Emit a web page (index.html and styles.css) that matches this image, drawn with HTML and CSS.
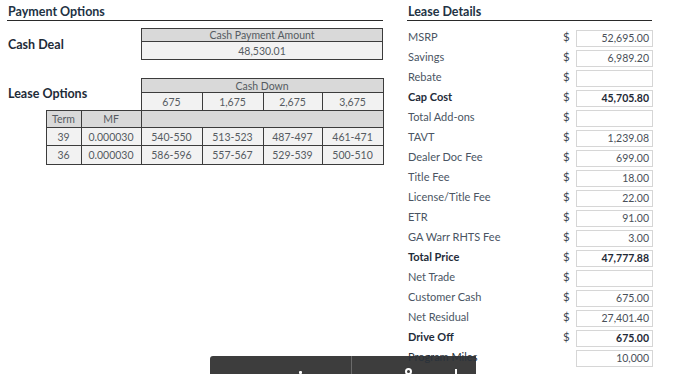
FILE: index.html
```html
<!DOCTYPE html>
<html>
<head>
<meta charset="utf-8">
<link rel="stylesheet" href="styles.css">
</head>
<body>
<div class="page">
  <section class="left">
    <h2 class="title">Payment Options</h2>
    <div class="cash-row">
      <div class="big-label">Cash Deal</div>
      <table class="grid cash">
        <tr><td class="hd">Cash Payment Amount</td></tr>
        <tr><td class="val">48,530.01</td></tr>
      </table>
    </div>
    <table class="grid lease">
      <colgroup>
        <col class="c0"><col class="c1"><col class="c2"><col class="c3"><col class="c3"><col class="c4"><col class="c3">
      </colgroup>
      <tr class="r-hd">
        <td class="blank lease-label" colspan="3" rowspan="2"><span class="big-label">Lease Options</span></td>
        <td class="hd" colspan="4">Cash Down</td>
      </tr>
      <tr class="r-val">
        <td class="val">675</td><td class="val">1,675</td><td class="val">2,675</td><td class="val">3,675</td>
      </tr>
      <tr class="r-term">
        <td class="blank"></td>
        <td class="hd">Term</td><td class="hd">MF</td><td class="hd" colspan="4"></td>
      </tr>
      <tr class="r-data">
        <td class="blank"></td>
        <td class="val">39</td><td class="val">0.000030</td><td class="val">540-550</td><td class="val">513-523</td><td class="val">487-497</td><td class="val">461-471</td>
      </tr>
      <tr class="r-data last">
        <td class="blank"></td>
        <td class="val">36</td><td class="val">0.000030</td><td class="val">586-596</td><td class="val">557-567</td><td class="val">529-539</td><td class="val">500-510</td>
      </tr>
    </table>
  </section>
  <section class="right">
    <h2 class="title">Lease Details</h2>
    <div class="details">
      <span class="lbl">MSRP</span><span class="cur">$</span><span class="box">52,695.00</span>
      <span class="lbl">Savings</span><span class="cur">$</span><span class="box">6,989.20</span>
      <span class="lbl">Rebate</span><span class="cur">$</span><span class="box"></span>
      <span class="lbl b">Cap Cost</span><span class="cur">$</span><span class="box b">45,705.80</span>
      <span class="lbl">Total Add-ons</span><span class="cur">$</span><span class="box"></span>
      <span class="lbl">TAVT</span><span class="cur">$</span><span class="box">1,239.08</span>
      <span class="lbl">Dealer Doc Fee</span><span class="cur">$</span><span class="box">699.00</span>
      <span class="lbl">Title Fee</span><span class="cur">$</span><span class="box">18.00</span>
      <span class="lbl">License/Title Fee</span><span class="cur">$</span><span class="box">22.00</span>
      <span class="lbl">ETR</span><span class="cur">$</span><span class="box">91.00</span>
      <span class="lbl">GA Warr RHTS Fee</span><span class="cur">$</span><span class="box">3.00</span>
      <span class="lbl b">Total Price</span><span class="cur">$</span><span class="box b">47,777.88</span>
      <span class="lbl">Net Trade</span><span class="cur">$</span><span class="box"></span>
      <span class="lbl">Customer Cash</span><span class="cur">$</span><span class="box">675.00</span>
      <span class="lbl">Net Residual</span><span class="cur">$</span><span class="box">27,401.40</span>
      <span class="lbl b">Drive Off</span><span class="cur">$</span><span class="box b">675.00</span>
      <span class="lbl over">Program Miles</span><span class="cur"></span><span class="box">10,000</span>
    </div>
  </section>
</div>
<div class="toolbar">
  <div class="tb-half">
    <span class="tb-dot"></span>
  </div>
  <div class="tb-half second">
    <span class="tb-ring"></span>
    <span class="tb-bar"></span>
  </div>
</div>
</body>
</html>
```
FILE: styles.css
```css
html, body {
  margin: 0;
  padding: 0;
  background: #ffffff;
  overflow: hidden;
}
body {
  font-family: Lato, "Open Sans", sans-serif;
  font-size: 11px;
  color: #4a5461;
  width: 691px;
  height: 374px;
  position: relative;
}
.page {
  display: flex;
  gap: 24px;
  padding: 3px 0 0 7px;
}
.left { width: 376px; }
.right { width: 245px; position: relative; z-index: 2; }

.title {
  margin: 0;
  font-size: 12.5px;
  font-weight: bold;
  color: #223244;
  line-height: 17px;
  padding-left: 1px;
  border-bottom: 1px solid #2a2a2a;
}

.big-label {
  font-weight: bold;
  font-size: 12.5px;
  color: #1e2b38;
}

.cash-row {
  display: flex;
  align-items: center;
  margin-top: 7px;
}
.cash-row .big-label { width: 133px; padding-left: 1px; }

.grid {
  border-collapse: collapse;
  font-size: 10.5px;
  color: #555b61;
}
.grid td {
  border: 1px solid #3c3c3c;
  text-align: center;
  padding: 0;
}
.grid td.hd { background: #d9d9d9; }
.grid td.val { background: #f2f2f2; }
.grid td.blank { border: none; background: transparent; }

.cash { width: 242px; }
.cash tr:first-child td { height: 12px; line-height: 12px; }
.cash tr:last-child td { height: 17px; }

.lease {
  margin-top: 18px;
  table-layout: fixed;
  width: 376px;
}
.lease .c0 { width: 39px; }
.lease .c1 { width: 35px; }
.lease .c2 { width: 60px; }
.lease .c3 { width: 61px; }
.lease .c4 { width: 59px; }
.lease td.lease-label {
  text-align: left;
  vertical-align: middle;
  padding-left: 1px;
  padding-bottom: 1px;
}
.r-hd td { height: 13px; line-height: 12px; }
.r-val td { height: 17px; }
.r-term td { height: 16px; line-height: 14px; }
.r-data td { height: 17px; }
.r-data.last td { height: 18px; }

.details {
  display: grid;
  grid-template-columns: 156px 13px 77px;
  grid-auto-rows: 17px;
  row-gap: 3px;
  margin-top: 9px;
  align-items: center;
}
.lbl {
  color: #4a5563;
  white-space: nowrap;
  padding-left: 1px;
  line-height: 14px;
  padding-bottom: 3px;
}
.lbl.b { font-weight: bold; color: #1f2c3a; }
.lbl.over { color: #2a323b; }
.cur {
  color: #3c4550;
  text-align: left;
  font-size: 11.5px;
  line-height: 14px;
  padding-bottom: 3px;
}
.box {
  box-sizing: border-box;
  height: 17px;
  border: 1px solid #d6d6d6;
  background: #fff;
  text-align: right;
  padding-right: 3px;
  line-height: 15px;
  font-size: 10.5px;
  color: #4a5058;
}
.box.b { font-weight: bold; color: #1f2a36; }

.toolbar {
  position: absolute;
  left: 210px;
  top: 356px;
  width: 266px;
  height: 18px;
  background: #3d3d3d;
  border-top-left-radius: 3px;
  display: flex;
  z-index: 1;
}
.tb-half {
  width: 141px;
  position: relative;
}
.tb-half.second {
  flex: 1;
  border-left: 1px solid #6a6a6a;
}
.tb-dot {
  position: absolute;
  left: 89px;
  top: 15px;
  width: 3px;
  height: 3px;
  background: #ffffff;
  border-radius: 1px;
}
.tb-ring {
  position: absolute;
  left: 53px;
  top: 12px;
  width: 7px;
  height: 7px;
  border: 2px solid #ffffff;
  border-radius: 50%;
  box-sizing: border-box;
}
.tb-bar {
  position: absolute;
  left: 103px;
  top: 13px;
  width: 2px;
  height: 5px;
  background: #ffffff;
}
```
